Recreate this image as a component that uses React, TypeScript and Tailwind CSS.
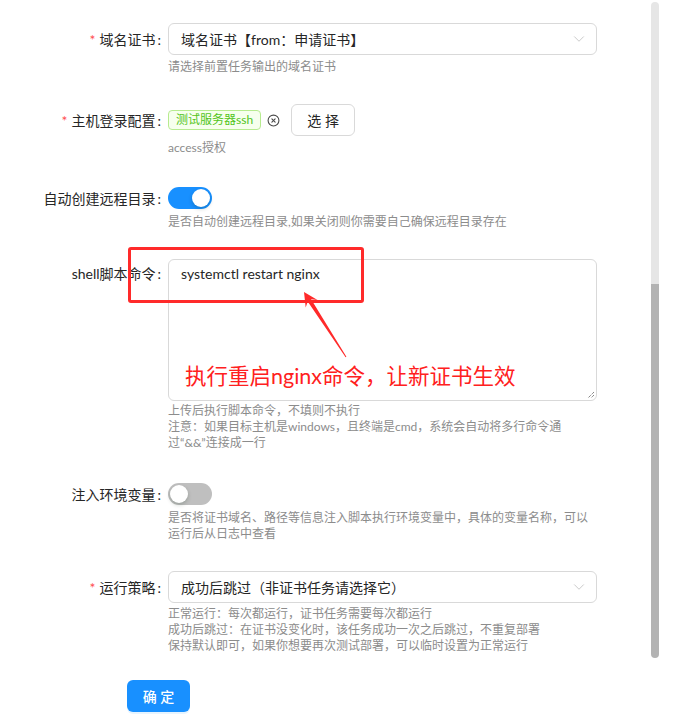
import { ChevronDown, CircleX } from "lucide-react"

const font = { fontFamily: 'Lato, "Noto Sans CJK SC", sans-serif' }

function Label({ text, required }: { text: string; required?: boolean }) {
  return (
    <div className="w-[168px] h-8 flex items-center justify-end pr-[7px] text-[14px] text-[#262626] shrink-0">
      {required && <span className="text-[#ff4d4f] mr-[4px] text-[14px]">*</span>}
      <span>{text}</span>
      <span className="ml-[2px]">:</span>
    </div>
  )
}

function Help({ lines, className = "" }: { lines: string[]; className?: string }) {
  return (
    <div className={"text-[12px] leading-[16px] text-[#8c8c8c] whitespace-nowrap " + className}>
      {lines.map((l, i) => (
        <div key={i}>{l}</div>
      ))}
    </div>
  )
}

function Select({ value }: { value: string }) {
  return (
    <div className="h-8 border border-[#d9d9d9] rounded-[6px] pl-[12px] pr-[8px] flex items-center justify-between text-[14px] text-[#262626]">
      <span>{value}</span>
      <ChevronDown size={18} strokeWidth={1.1} className="text-[#bfbfbf]" />
    </div>
  )
}

function Switch({ on }: { on: boolean }) {
  return (
    <div className={"w-[44px] h-[22px] rounded-full flex items-center px-[2px] " + (on ? "bg-[#1890ff] justify-end" : "bg-[#bfbfbf] justify-start")}>
      <div className="w-[18px] h-[18px] rounded-full bg-white shadow-[0_2px_4px_rgba(0,35,11,0.2)]" />
    </div>
  )
}

export default function App() {
  return (
    <div className="relative w-[681px] h-[720px] bg-white overflow-hidden flex" style={font}>
      <div className="w-[651px] pt-[23px]">
        {/* 域名证书 */}
        <div className="flex">
          <Label text="域名证书" required />
          <div className="w-[429px]">
            <Select value="域名证书【from：申请证书】" />
            <Help className="mt-[4px]" lines={["请选择前置任务输出的域名证书"]} />
          </div>
        </div>

        {/* 主机登录配置 */}
        <div className="flex mt-[29px]">
          <Label text="主机登录配置" required />
          <div className="w-[429px]">
            <div className="h-8 flex items-center">
              <span className="h-[20px] px-[7px] flex items-center border border-[#b7eb8f] bg-[#f6ffed] text-[#52c41a] text-[12px] rounded-[4px]">
                测试服务器ssh
              </span>
              <CircleX size={13} strokeWidth={2} className="ml-[6px] text-[#4a4a4a]" />
              <button className="ml-[11px] w-[64px] h-8 border border-[#d9d9d9] rounded-[6px] bg-white text-[14px] text-[#262626]">
                选 择
              </button>
            </div>
            <Help className="mt-[4px]" lines={["access授权"]} />
          </div>
        </div>

        {/* 自动创建远程目录 */}
        <div className="flex mt-[26px]">
          <Label text="自动创建远程目录" />
          <div className="w-[429px]">
            <div className="h-8 flex items-center">
              <Switch on />
            </div>
            <Help lines={["是否自动创建远程目录,如果关闭则你需要自己确保远程目录存在"]} />
          </div>
        </div>

        {/* shell脚本命令 */}
        <div className="flex mt-[29px]">
          <div className="w-[168px] h-[28px] flex items-center justify-end pr-[7px] text-[14px] text-[#262626] shrink-0">
            <span>shell脚本命令</span>
            <span className="ml-[2px]">:</span>
          </div>
          <div className="w-[429px]">
            <div className="relative h-[142px] border border-[#d9d9d9] rounded-[6px] px-[12px] pt-[3px] text-[14px] leading-[22px] text-[#262626]">
              systemctl restart nginx
              <svg className="absolute right-[1px] bottom-[1px]" width="10" height="10" viewBox="0 0 10 10">
                <path d="M9 3 L3 9 M9 6 L6 9" stroke="#555" strokeWidth="1" strokeDasharray="1 1" />
              </svg>
            </div>
            <Help
              className="mt-[2px]"
              lines={[
                "上传后执行脚本命令，不填则不执行",
                "注意：如果目标主机是windows，且终端是cmd，系统会自动将多行命令通",
                "过“&&”连接成一行",
              ]}
            />
          </div>
        </div>

        {/* 注入环境变量 */}
        <div className="flex mt-[27px]">
          <Label text="注入环境变量" />
          <div className="w-[429px]">
            <div className="h-8 flex items-center">
              <Switch on={false} />
            </div>
            <Help
              lines={[
                "是否将证书域名、路径等信息注入脚本执行环境变量中，具体的变量名称，可以",
                "运行后从日志中查看",
              ]}
            />
          </div>
        </div>

        {/* 运行策略 */}
        <div className="flex mt-[29px]">
          <Label text="运行策略" required />
          <div className="w-[429px]">
            <Select value="成功后跳过（非证书任务请选择它）" />
            <Help
              className="mt-[3px]"
              lines={[
                "正常运行：每次都运行，证书任务需要每次都运行",
                "成功后跳过：在证书没变化时，该任务成功一次之后跳过，不重复部署",
                "保持默认即可，如果你想要再次测试部署，可以临时设置为正常运行",
              ]}
            />
          </div>
        </div>

        <div className="mt-[26px] pl-[127px]">
          <button className="w-[63px] h-8 rounded-[6px] bg-[#1890ff] text-white text-[14px] font-medium shadow-[0_2px_0_rgba(5,145,255,0.1)]">
            确 定
          </button>
        </div>
      </div>

      {/* scrollbar */}
      <div className="w-[8px] flex flex-col pt-[2px]">
        <div className="h-[282px] bg-[#e6e6e6] rounded-t-full" />
        <div className="h-[374px] bg-[#b3b3b3] rounded-b-full" />
      </div>

      {/* annotation */}
      <div className="absolute left-[128px] top-[247px] w-[236px] h-[56px] border-[3px] border-[#ff2a2a] rounded-[3px]" />
      <svg className="absolute left-[290px] top-[280px]" width="70" height="90" viewBox="0 0 70 90">
        <polygon
          points="14,12 27.5,20 21.1,19.3 56.4,76.7 55.6,77.3 17.7,21.5 15.7,27.6"
          fill="#ff2a2a"
        />
      </svg>
      <div className="absolute left-[185px] top-[364px] text-[21.5px] leading-[24px] text-[#ff2020] whitespace-nowrap">
        执行重启nginx命令，让新证书生效
      </div>
    </div>
  )
}
